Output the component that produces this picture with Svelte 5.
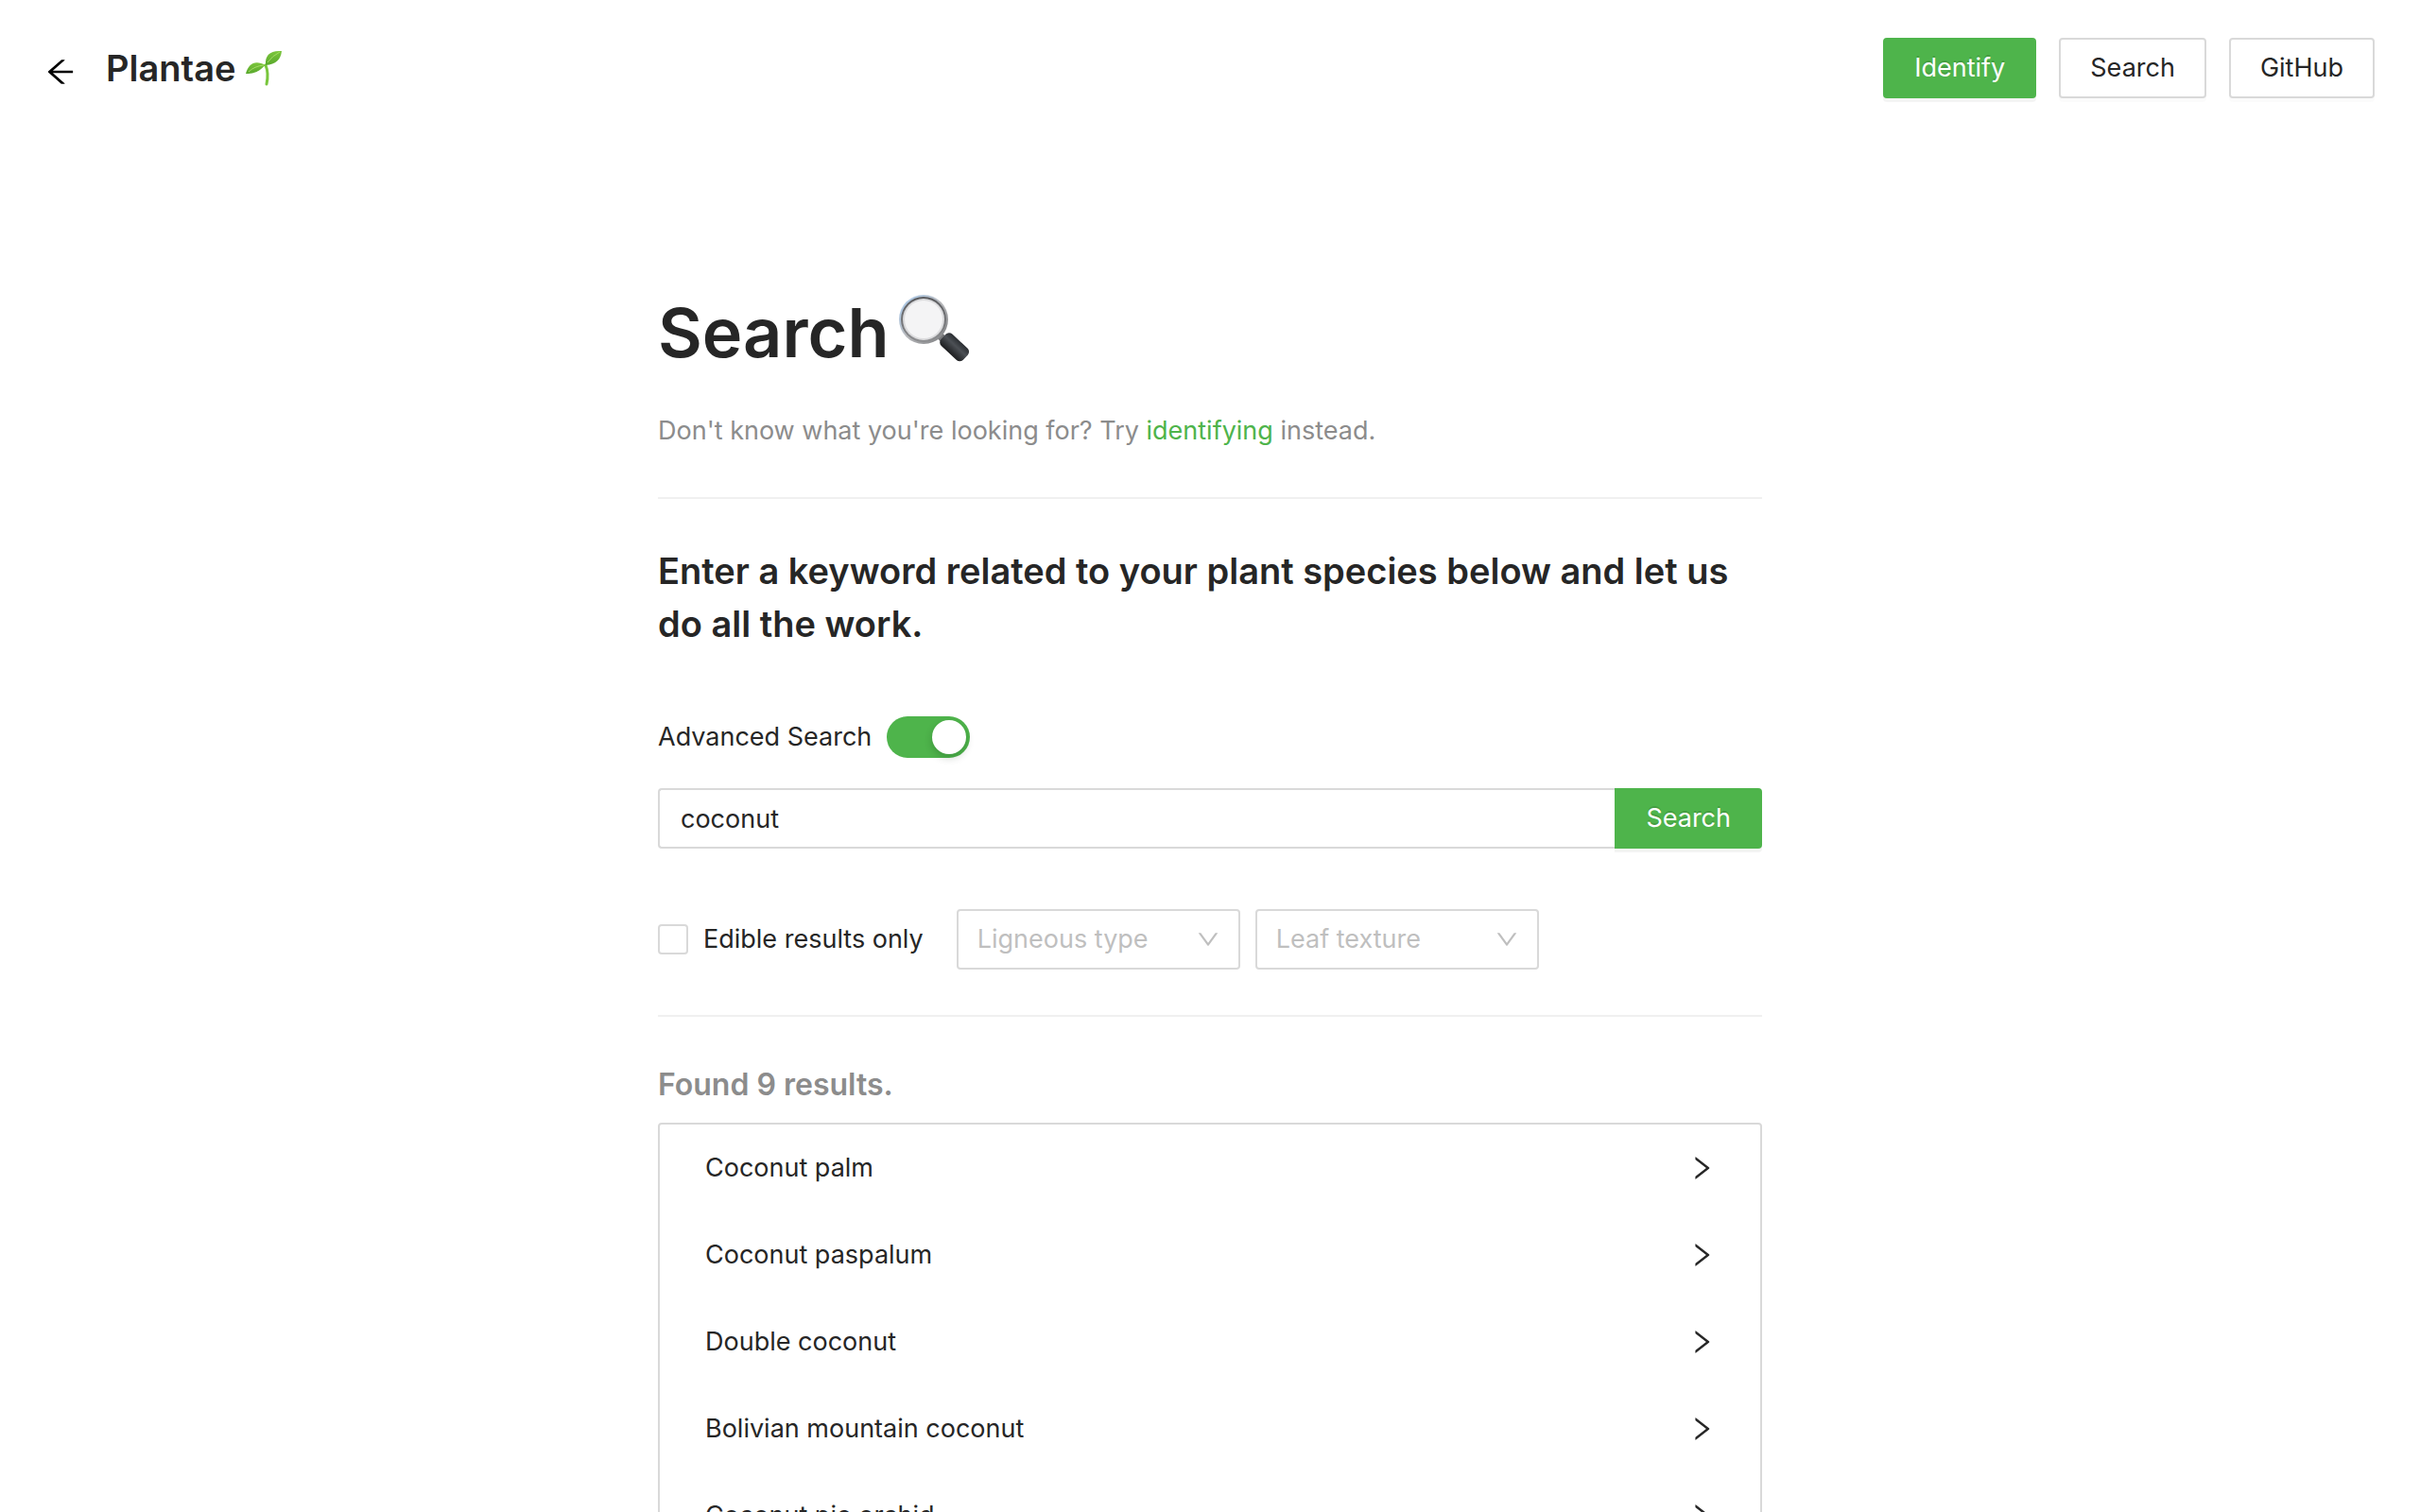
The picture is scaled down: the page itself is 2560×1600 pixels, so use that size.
<script>
  let advanced = $state(true);
  let keyword = $state('coconut');
  const results = [
    'Coconut palm',
    'Coconut paspalum',
    'Double coconut',
    'Bolivian mountain coconut',
    'Coconut pie orchid',
  ];
</script>

<div class="page">
  <header class="header">
    <a class="back" href="#back" aria-label="Back">
      <svg viewBox="64 64 896 896" width="32" height="32" fill="currentColor" aria-hidden="true">
        <path d="M872 474H286.900l350.200-304c5.600-4.900 2.200-14-5.200-14h-88.500c-3.900 0-7.600 1.400-10.500 3.900L155 487.800a31.960 31.960 0 0 0 0 48.300L535.100 866c1.500 1.300 3.300 2 5.200 2h91.500c7.400 0 10.800-9.200 5.200-14L286.900 550H872c4.400 0 8-3.600 8-8v-60c0-4.400-3.600-8-8-8z" />
      </svg>
    </a>
    <div class="brand">
      <span>Plantae</span>
      <svg class="sprout" viewBox="0 0 40 40" width="40" height="40" aria-hidden="true">
        <defs>
          <linearGradient id="leaf" x1="0" y1="0" x2="0" y2="1">
            <stop offset="0" stop-color="#7cc63c" />
            <stop offset="1" stop-color="#58a82c" />
          </linearGradient>
        </defs>
        <path d="M22 17c2.500 6 2.500 13 1 20" fill="none" stroke="#79c63d" stroke-width="3" stroke-linecap="round" />
        <path d="M1 26C4 15 11 11 22 17C17 20 15 26 1 26z" fill="url(#leaf)" />
        <path d="M22 17C21 6 27 1 39 2C38 11 33 16 22 17z" fill="url(#leaf)" />
        <path d="M4 24Q10 18 20 17M24 14Q29 7 37 3" fill="none" stroke="#a5dc64" stroke-width="1" />
      </svg>
    </div>
    <nav class="actions">
      <button class="btn primary">Identify</button>
      <button class="btn">Search</button>
      <button class="btn">GitHub</button>
    </nav>
  </header>

  <main class="content">
    <h1>
      <span>Search</span>
      <svg viewBox="0 0 76 76" width="76" height="76" aria-hidden="true">
        <defs>
          <linearGradient id="rim" x1="0" y1="0" x2="1" y2="1">
            <stop offset="0" stop-color="#a9cdf2" />
            <stop offset="0.5" stop-color="#b9babd" />
            <stop offset="1" stop-color="#77787a" />
          </linearGradient>
          <linearGradient id="ring" x1="0" y1="0" x2="0" y2="1">
            <stop offset="0" stop-color="#5b5c5f" />
            <stop offset="0.6" stop-color="#77787b" />
            <stop offset="1" stop-color="#8f9092" />
          </linearGradient>
          <linearGradient id="grip" x1="0" y1="0" x2="0" y2="1">
            <stop offset="0" stop-color="#2a2d31" />
            <stop offset="0.4" stop-color="#4c5055" />
            <stop offset="1" stop-color="#1c1d1f" />
          </linearGradient>
        </defs>
        <path d="M43 43L50 50" stroke="#77787a" stroke-width="8" />
        <circle cx="27" cy="27" r="26" fill="url(#rim)" />
        <circle cx="27" cy="27" r="24" fill="url(#ring)" />
        <circle cx="27" cy="27" r="22" fill="#dcdcde" />
        <circle cx="27" cy="27" r="20" fill="#f4f4f5" />
        <rect x="46" y="-9" width="32" height="17" rx="5" fill="url(#grip)" transform="rotate(43) translate(20 1)" />
      </svg>
    </h1>
    <p class="hint">Don't know what you're looking for? Try <a href="#identify">identifying</a> instead.</p>
    <hr />
    <h2>Enter a keyword related to your plant species below and let us do all the work.</h2>

    <label class="advanced">
      <span>Advanced Search</span>
      <input class="switch" type="checkbox" role="switch" bind:checked={advanced} />
    </label>

    <form class="search" onsubmit={(e) => e.preventDefault()}>
      <input type="text" aria-label="Keyword" bind:value={keyword} />
      <button class="btn primary">Search</button>
    </form>

    <div class="filters">
      <label class="edible"><input type="checkbox" /><span>Edible results only</span></label>
      {#each ['Ligneous type', 'Leaf texture'] as name}
        <div class="select">
          <select aria-label={name}><option>{name}</option></select>
          <svg viewBox="64 64 896 896" width="24" height="24" fill="currentColor" aria-hidden="true">
            <path d="M884 256h-75c-5.100 0-9.900 2.500-12.900 6.600L512 654.200 227.900 262.600c-3-4.100-7.800-6.600-12.900-6.600h-75c-6.500 0-10.300 7.400-6.500 12.700l352.600 486.100c12.800 17.600 39 17.600 51.700 0l352.600-486.100c3.900-5.300.1-12.700-6.400-12.700z" />
          </svg>
        </div>
      {/each}
    </div>
    <hr />

    <h3>Found 9 results.</h3>
    <ul class="results">
      {#each results as name}
        <li>
          <a href="#plant">
            <span>{name}</span>
            <svg viewBox="64 64 896 896" width="28" height="28" fill="currentColor" aria-hidden="true">
              <path d="M765.700 486.800L314.900 134.700A7.970 7.970 0 0 0 302 141v77.300c0 4.900 2.300 9.600 6.100 12.600l360 281.100-360 281.100c-3.900 3-6.100 7.700-6.100 12.600V883c0 6.700 7.700 10.400 12.900 6.300l450.800-352.100a31.960 31.960 0 0 0 0-50.400z" />
            </svg>
          </a>
        </li>
      {/each}
    </ul>
  </main>
</div>

<style>
  :global(body) {
    background: #fff;
  }
  .page {
    height: 100vh;
    overflow: hidden;
    box-sizing: border-box;
    color: #262626;
    font-family: Inter, 'Liberation Sans', sans-serif;
    font-size: 27px;
    line-height: 44px;
  }
  .page * {
    box-sizing: border-box;
  }
  .page button,
  .page input,
  .page select {
    font: inherit;
    color: inherit;
    margin: 0;
  }
  a {
    color: inherit;
    text-decoration: none;
  }
  svg {
    display: block;
    flex: none;
  }
  .header {
    display: flex;
    align-items: center;
    padding: 40px 48px 0;
  }
  .back {
    margin: 8px 32px 0 0;
    color: #000;
  }
  .brand {
    display: flex;
    align-items: center;
    gap: 10px;
    font-size: 38px;
    font-weight: 600;
    line-height: 64px;
  }
  .actions {
    display: flex;
    gap: 24px;
    margin-left: auto;
  }
  .btn {
    height: 64px;
    padding: 0 31px;
    border: 2px solid #d9d9d9;
    border-radius: 4px;
    background: #fff;
    box-shadow: 0 4px 0 rgba(0, 0, 0, 0.016);
  }
  .page .primary {
    color: #fff;
    border-color: #4eb44b;
    background: #4eb44b;
    text-shadow: 0 -2px 0 rgba(0, 0, 0, 0.12);
    box-shadow: 0 4px 0 rgba(0, 0, 0, 0.045);
  }
  .content {
    max-width: 1168px;
    margin: 0 auto;
    padding-top: 200px;
  }
  h1 {
    display: flex;
    align-items: center;
    gap: 10px;
    margin: 0;
    font-size: 72px;
    font-weight: 600;
    line-height: 96px;
  }
  h1 svg {
    margin-bottom: 6px;
  }
  .hint {
    margin: 34px 0 48px;
    color: #8c8c8c;
  }
  .hint a {
    color: #4eb44b;
  }
  hr {
    height: 2px;
    margin: 0;
    border: 0;
    background: #f0f0f0;
  }
  h2 {
    margin: 48px 0 70px;
    font-size: 38px;
    font-weight: 600;
    line-height: 56px;
  }
  .advanced {
    display: flex;
    align-items: center;
    gap: 16px;
  }
  .switch {
    appearance: none;
    display: flex;
    width: 88px;
    height: 44px;
    padding: 4px;
    border-radius: 22px;
    background: #bfbfbf;
  }
  .switch::before {
    content: '';
    width: 36px;
    height: 36px;
    border-radius: 50%;
    background: #fff;
    box-shadow: 0 4px 8px rgba(0, 35, 11, 0.2);
  }
  .switch:checked {
    justify-content: flex-end;
    background: #4eb44b;
  }
  .search {
    display: flex;
    margin: 32px 0 64px;
  }
  .search input {
    flex: 1;
    min-width: 0;
    height: 64px;
    padding: 0 22px;
    border: 2px solid #d9d9d9;
    border-right: 0;
    border-radius: 4px 0 0 4px;
    outline: 0;
  }
  .search .btn {
    border-radius: 0 4px 4px 0;
  }
  .filters {
    display: flex;
    align-items: center;
    gap: 16px;
    margin-bottom: 48px;
  }
  .edible {
    display: flex;
    align-items: center;
    gap: 16px;
    margin-right: 19px;
  }
  .edible input {
    appearance: none;
    width: 32px;
    height: 32px;
    border: 2px solid #d9d9d9;
    border-radius: 4px;
  }
  .select {
    display: grid;
    align-items: center;
    width: 300px;
    color: #bfbfbf;
  }
  .select > * {
    grid-area: 1 / 1;
  }
  .select select {
    appearance: none;
    width: 100%;
    height: 64px;
    padding: 0 20px;
    border: 2px solid #d9d9d9;
    border-radius: 4px;
    background: #fff;
  }
  .select svg {
    justify-self: end;
    margin-right: 22px;
    pointer-events: none;
  }
  h3 {
    margin: 48px 0 16px;
    color: #8c8c8c;
    font-size: 32px;
    font-weight: 600;
    line-height: 48px;
  }
  .results {
    margin: 0;
    padding: 0;
    border: 2px solid #d9d9d9;
    border-radius: 4px;
    list-style: none;
  }
  .results a {
    display: flex;
    align-items: center;
    justify-content: space-between;
    padding: 24px 48px;
  }
</style>
